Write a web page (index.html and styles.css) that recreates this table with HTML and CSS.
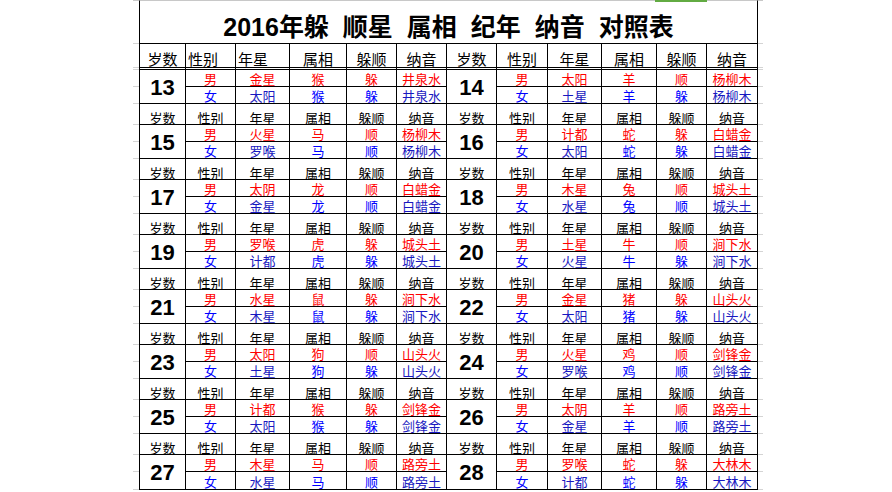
FILE: index.html
```html
<!DOCTYPE html>
<html lang="zh-CN">
<head>
<meta charset="utf-8">
<title>2016年躲 顺星 属相 纪年 纳音 对照表</title>
<link rel="stylesheet" href="styles.css">
</head>
<body>
<div class="page">
  <div class="selmark"></div>
  <div class="sheet">
    <i class="t top"></i><div class="title">2016年躲 顺星 属相 纪年 纳音 对照表</div><i class="t top"></i>

    <i class="t dbl"></i>
    <div class="c h h1 l">岁数</div><div class="c h h1 hl">性别</div><div class="c h h1 hl">年星</div><div class="c h h1">属相</div><div class="c h h1">躲顺</div><div class="c h h1">纳音</div>
    <div class="c h h1">岁数</div><div class="c h h1">性别</div><div class="c h h1">年星</div><div class="c h h1">属相</div><div class="c h h1">躲顺</div><div class="c h h1">纳音</div>
    <i class="t dbl"></i>
    <i class="t"></i>
    <div class="c age l">13</div><div class="c m">男</div><div class="c m">金星</div><div class="c m">猴</div><div class="c m">躲</div><div class="c m">井泉水</div>
    <div class="c age">14</div><div class="c m">男</div><div class="c m">太阳</div><div class="c m">羊</div><div class="c m">顺</div><div class="c m">杨柳木</div>
    <i class="t"></i>
    <i class="t"></i>
    <div class="c f">女</div><div class="c f2">太阳</div><div class="c f">猴</div><div class="c f">躲</div><div class="c f2">井泉水</div>
    <div class="c f">女</div><div class="c f2">土星</div><div class="c f">羊</div><div class="c f">躲</div><div class="c f2">杨柳木</div>
    <i class="t"></i>

    <i class="t"></i>
    <div class="c h l">岁数</div><div class="c h">性别</div><div class="c h">年星</div><div class="c h">属相</div><div class="c h">躲顺</div><div class="c h">纳音</div>
    <div class="c h">岁数</div><div class="c h">性别</div><div class="c h">年星</div><div class="c h">属相</div><div class="c h">躲顺</div><div class="c h">纳音</div>
    <i class="t"></i>
    <i class="t"></i>
    <div class="c age l">15</div><div class="c m">男</div><div class="c m">火星</div><div class="c m">马</div><div class="c m">顺</div><div class="c m">杨柳木</div>
    <div class="c age">16</div><div class="c m">男</div><div class="c m">计都</div><div class="c m">蛇</div><div class="c m">躲</div><div class="c m">白蜡金</div>
    <i class="t"></i>
    <i class="t"></i>
    <div class="c f">女</div><div class="c f2">罗喉</div><div class="c f">马</div><div class="c f">顺</div><div class="c f2">杨柳木</div>
    <div class="c f">女</div><div class="c f2">太阳</div><div class="c f">蛇</div><div class="c f">躲</div><div class="c f2">白蜡金</div>
    <i class="t"></i>

    <i class="t"></i>
    <div class="c h l">岁数</div><div class="c h">性别</div><div class="c h">年星</div><div class="c h">属相</div><div class="c h">躲顺</div><div class="c h">纳音</div>
    <div class="c h">岁数</div><div class="c h">性别</div><div class="c h">年星</div><div class="c h">属相</div><div class="c h">躲顺</div><div class="c h">纳音</div>
    <i class="t"></i>
    <i class="t"></i>
    <div class="c age l">17</div><div class="c m">男</div><div class="c m">太阴</div><div class="c m">龙</div><div class="c m">顺</div><div class="c m">白蜡金</div>
    <div class="c age">18</div><div class="c m">男</div><div class="c m">木星</div><div class="c m">兔</div><div class="c m">顺</div><div class="c m">城头土</div>
    <i class="t"></i>
    <i class="t"></i>
    <div class="c f">女</div><div class="c f2">金星</div><div class="c f">龙</div><div class="c f">顺</div><div class="c f2">白蜡金</div>
    <div class="c f">女</div><div class="c f2">水星</div><div class="c f">兔</div><div class="c f">顺</div><div class="c f2">城头土</div>
    <i class="t"></i>

    <i class="t"></i>
    <div class="c h l">岁数</div><div class="c h">性别</div><div class="c h">年星</div><div class="c h">属相</div><div class="c h">躲顺</div><div class="c h">纳音</div>
    <div class="c h">岁数</div><div class="c h">性别</div><div class="c h">年星</div><div class="c h">属相</div><div class="c h">躲顺</div><div class="c h">纳音</div>
    <i class="t"></i>
    <i class="t"></i>
    <div class="c age l">19</div><div class="c m">男</div><div class="c m">罗喉</div><div class="c m">虎</div><div class="c m">躲</div><div class="c m">城头土</div>
    <div class="c age">20</div><div class="c m">男</div><div class="c m">土星</div><div class="c m">牛</div><div class="c m">顺</div><div class="c m">涧下水</div>
    <i class="t"></i>
    <i class="t"></i>
    <div class="c f">女</div><div class="c f2">计都</div><div class="c f">虎</div><div class="c f">躲</div><div class="c f2">城头土</div>
    <div class="c f">女</div><div class="c f2">火星</div><div class="c f">牛</div><div class="c f">躲</div><div class="c f2">涧下水</div>
    <i class="t"></i>

    <i class="t"></i>
    <div class="c h l">岁数</div><div class="c h">性别</div><div class="c h">年星</div><div class="c h">属相</div><div class="c h">躲顺</div><div class="c h">纳音</div>
    <div class="c h">岁数</div><div class="c h">性别</div><div class="c h">年星</div><div class="c h">属相</div><div class="c h">躲顺</div><div class="c h">纳音</div>
    <i class="t"></i>
    <i class="t"></i>
    <div class="c age l">21</div><div class="c m">男</div><div class="c m">水星</div><div class="c m">鼠</div><div class="c m">躲</div><div class="c m">涧下水</div>
    <div class="c age">22</div><div class="c m">男</div><div class="c m">金星</div><div class="c m">猪</div><div class="c m">躲</div><div class="c m">山头火</div>
    <i class="t"></i>
    <i class="t"></i>
    <div class="c f">女</div><div class="c f2">木星</div><div class="c f">鼠</div><div class="c f">躲</div><div class="c f2">涧下水</div>
    <div class="c f">女</div><div class="c f2">太阳</div><div class="c f">猪</div><div class="c f">躲</div><div class="c f2">山头火</div>
    <i class="t"></i>

    <i class="t"></i>
    <div class="c h l">岁数</div><div class="c h">性别</div><div class="c h">年星</div><div class="c h">属相</div><div class="c h">躲顺</div><div class="c h">纳音</div>
    <div class="c h">岁数</div><div class="c h">性别</div><div class="c h">年星</div><div class="c h">属相</div><div class="c h">躲顺</div><div class="c h">纳音</div>
    <i class="t"></i>
    <i class="t"></i>
    <div class="c age l">23</div><div class="c m">男</div><div class="c m">太阳</div><div class="c m">狗</div><div class="c m">顺</div><div class="c m">山头火</div>
    <div class="c age">24</div><div class="c m">男</div><div class="c m">火星</div><div class="c m">鸡</div><div class="c m">顺</div><div class="c m">剑锋金</div>
    <i class="t"></i>
    <i class="t"></i>
    <div class="c f">女</div><div class="c f2">土星</div><div class="c f">狗</div><div class="c f">躲</div><div class="c f2">山头火</div>
    <div class="c f">女</div><div class="c f2">罗喉</div><div class="c f">鸡</div><div class="c f">顺</div><div class="c f2">剑锋金</div>
    <i class="t"></i>

    <i class="t"></i>
    <div class="c h l">岁数</div><div class="c h">性别</div><div class="c h">年星</div><div class="c h">属相</div><div class="c h">躲顺</div><div class="c h">纳音</div>
    <div class="c h">岁数</div><div class="c h">性别</div><div class="c h">年星</div><div class="c h">属相</div><div class="c h">躲顺</div><div class="c h">纳音</div>
    <i class="t"></i>
    <i class="t"></i>
    <div class="c age l">25</div><div class="c m">男</div><div class="c m">计都</div><div class="c m">猴</div><div class="c m">躲</div><div class="c m">剑锋金</div>
    <div class="c age">26</div><div class="c m">男</div><div class="c m">太阴</div><div class="c m">羊</div><div class="c m">顺</div><div class="c m">路旁土</div>
    <i class="t"></i>
    <i class="t"></i>
    <div class="c f">女</div><div class="c f2">太阳</div><div class="c f">猴</div><div class="c f">躲</div><div class="c f2">剑锋金</div>
    <div class="c f">女</div><div class="c f2">金星</div><div class="c f">羊</div><div class="c f">顺</div><div class="c f2">路旁土</div>
    <i class="t"></i>

    <i class="t"></i>
    <div class="c h l">岁数</div><div class="c h">性别</div><div class="c h">年星</div><div class="c h">属相</div><div class="c h">躲顺</div><div class="c h">纳音</div>
    <div class="c h">岁数</div><div class="c h">性别</div><div class="c h">年星</div><div class="c h">属相</div><div class="c h">躲顺</div><div class="c h">纳音</div>
    <i class="t"></i>
    <i class="t"></i>
    <div class="c age l">27</div><div class="c m">男</div><div class="c m">木星</div><div class="c m">马</div><div class="c m">顺</div><div class="c m">路旁土</div>
    <div class="c age">28</div><div class="c m">男</div><div class="c m">罗喉</div><div class="c m">蛇</div><div class="c m">躲</div><div class="c m">大林木</div>
    <i class="t"></i>
    <i class="t"></i>
    <div class="c f">女</div><div class="c f2">水星</div><div class="c f">马</div><div class="c f">顺</div><div class="c f2">路旁土</div>
    <div class="c f">女</div><div class="c f2">计都</div><div class="c f">蛇</div><div class="c f">躲</div><div class="c f2">大林木</div>
    <i class="t"></i>
  </div>
</div>
</body>
</html>
```
FILE: styles.css
```css
html, body {
  margin: 0;
  padding: 0;
  background: #ffffff;
}

body {
  font-family: "Noto Sans CJK SC", "Liberation Sans", sans-serif;
  color: #000;
  overflow: hidden;
}

.page {
  position: relative;
  padding-left: 133px;
}

.selmark {
  position: absolute;
  top: 0;
  left: 655px;
  width: 52px;
  height: 2px;
  background: #62ab42;
  z-index: 2;
}

.sheet {
  display: grid;
  width: max-content;
  grid-template-columns: 6px 47px 50px 54px 57px 50px 50px 50px 51px 54px 55px 50px 51px 5px;
  grid-template-rows: 44px 26px 17px 17px repeat(7, 20.8px 17.15px 17.15px);
}

.sheet > * {
  box-sizing: border-box;
  min-width: 0;
}

.t {
  display: block;
  border-bottom: 1px solid #d4d4d4;
}

.t.top {
  border-top: 1px solid #c8c8c8;
}

.t.dbl {
  border-bottom: 3px double #d4d4d4;
}

.title {
  grid-column: span 12;
  border: 1px solid #000;
  border-top-color: #c8c8c8;
  display: flex;
  justify-content: center;
  align-items: flex-end;
  padding-bottom: 3px;
  font-family: "Liberation Sans", "Noto Sans CJK SC", sans-serif;
  font-weight: bold;
  font-size: 25px;
  line-height: 25px;
  word-spacing: 7px;
  white-space: nowrap;
}

.c {
  border-right: 1px solid #000;
  border-bottom: 1px solid #000;
  display: flex;
  justify-content: center;
  align-items: flex-end;
  white-space: nowrap;
  font-size: 13px;
  line-height: 13px;
  padding-bottom: 1px;
}

.l {
  border-left: 1px solid #000;
}

.h {
  color: #000;
  padding-bottom: 0;
}

.h1 {
  font-size: 15px;
  line-height: 15px;
  border-bottom: 3px double #000;
  padding-bottom: 1px;
}

.hl {
  justify-content: flex-start;
  padding-left: 2px;
}

.age {
  grid-row: span 2;
  align-items: center;
  padding: 3px 0 0;
  font-family: "Liberation Sans", sans-serif;
  font-weight: bold;
  font-size: 22px;
  line-height: 22px;
  color: #000;
}

.m {
  color: #ff0000;
}

.f {
  color: #0000ff;
}

.f2 {
  color: #1818c0;
}
```
